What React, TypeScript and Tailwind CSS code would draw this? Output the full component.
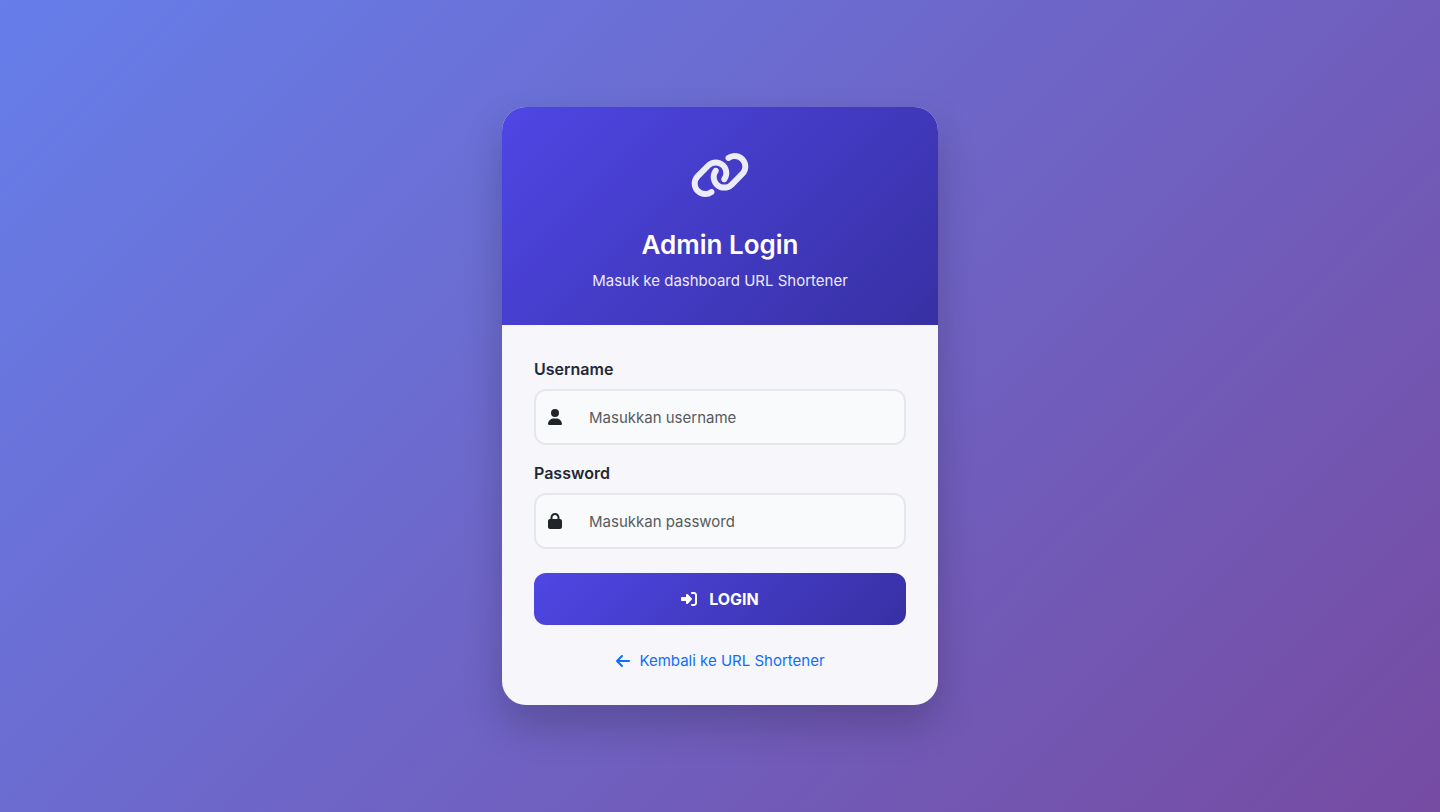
import { FaArrowLeft, FaLink, FaLock, FaRightToBracket, FaUser } from "react-icons/fa6";
import type { ReactNode } from "react";

type FieldProps = {
  id: string;
  label: string;
  type: string;
  placeholder: string;
  icon: ReactNode;
};

function Field({ id, label, type, placeholder, icon }: FieldProps) {
  return (
    <div className="mb-4">
      <label htmlFor={id} className="mb-2 block font-semibold text-[#1f2937]">
        {label}
      </label>
      <div className="flex items-center rounded-xl border-2 border-[#e5e7eb] bg-[#f9fafb]">
        <span className="flex w-[38px] justify-center text-base text-[#212529]">{icon}</span>
        <input
          id={id}
          type={type}
          placeholder={placeholder}
          className="h-13 min-w-0 flex-1 bg-transparent pr-4 pl-[15px] text-[15px] text-[#212529] outline-none placeholder:text-[#565b60]"
        />
      </div>
    </div>
  );
}

export default function App() {
  return (
    <main className="flex min-h-screen items-center justify-center bg-[linear-gradient(135deg,#667eea_0%,#764ba2_100%)] p-4 font-['Inter',sans-serif] text-base">
      <div className="w-full max-w-[436px] overflow-hidden rounded-3xl bg-[#f7f6fb] shadow-[0_20px_40px_rgba(0,0,0,0.2)]">
        <header className="bg-[linear-gradient(135deg,#4f46e5_0%,#3730a3_100%)] px-8 pt-11 pb-8 text-center text-white">
          <FaLink className="mx-auto mb-7 h-12 w-15 opacity-90" />
          <h1 className="mb-1.5 text-[26px] leading-9 font-semibold">Admin Login</h1>
          <p className="text-[15px] leading-6 opacity-90">Masuk ke dashboard URL Shortener</p>
        </header>
        <form className="p-8" onSubmit={(e) => e.preventDefault()}>
          <Field id="username" label="Username" type="text" placeholder="Masukkan username" icon={<FaUser />} />
          <Field id="password" label="Password" type="password" placeholder="Masukkan password" icon={<FaLock />} />
          <button
            type="submit"
            className="mt-6 flex h-13 w-full items-center justify-center gap-3 rounded-xl bg-[linear-gradient(135deg,#4f46e5_0%,#3730a3_100%)] font-bold text-white"
          >
            <FaRightToBracket />
            LOGIN
          </button>
          <div className="mt-6 flex justify-center">
            <a href="#" className="flex items-center gap-2 text-[15px] leading-6 text-[#0d6efd]">
              <FaArrowLeft className="text-base" />
              Kembali ke URL Shortener
            </a>
          </div>
        </form>
      </div>
    </main>
  );
}
